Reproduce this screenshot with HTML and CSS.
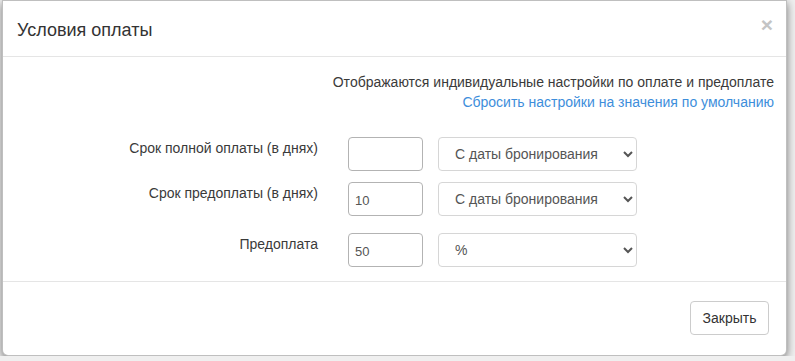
FILE: index.html
```html
<!DOCTYPE html>
<html lang="ru">
<head>
    <meta charset="UTF-8">
    <title>Условия оплаты</title>
    <link rel="stylesheet" href="styles.css">
</head>
<body>
    <div class="modal">
        <div class="modal-header">
            <h4 class="modal-title">Условия оплаты</h4>
            <button type="button" class="close">&times;</button>
        </div>
        <div class="modal-body">
            <div class="notice">
                <div>Отображаются индивидуальные настройки по оплате и предоплате</div>
                <a href="#">Сбросить настройки на значения по умолчанию</a>
            </div>
            <form class="form">
                <div class="row row-first">
                    <label for="full-days" class="control-label">Срок полной оплаты (в днях)</label>
                    <input type="text" id="full-days" class="days">
                    <select class="kind">
                        <option>С даты бронирования</option>
                    </select>
                </div>
                <div class="row row-second">
                    <label for="pre-days" class="control-label">Срок предоплаты (в днях)</label>
                    <input type="text" id="pre-days" class="days" value="10">
                    <select class="kind">
                        <option>С даты бронирования</option>
                    </select>
                </div>
                <div class="row row-third">
                    <label for="prepay" class="control-label">Предоплата</label>
                    <input type="text" id="prepay" class="days" value="50">
                    <select class="kind">
                        <option>%</option>
                    </select>
                </div>
            </form>
        </div>
        <div class="modal-footer">
            <button type="button" class="btn">Закрыть</button>
        </div>
    </div>
</body>
</html>
```

FILE: styles.css
```css
* {
    box-sizing: border-box;
}

body {
    margin: 0;
    padding: 0 8px 0 2px;
    background: #efefef;
    font-family: "Liberation Sans", Arial, sans-serif;
    font-size: 14px;
    color: #3a3a3a;
}

.modal {
    width: 785px;
    height: 356px;
    background: #fff;
    border: 1px solid rgba(0, 0, 0, 0.25);
    border-radius: 0 0 6px 6px;
    box-shadow: 0 3px 8px rgba(0, 0, 0, 0.5);
    display: flex;
    flex-direction: column;
}

.modal-header {
    display: flex;
    align-items: center;
    justify-content: space-between;
    height: 56px;
    padding: 0 13px 0 14px;
    border-bottom: 1px solid #e5e5e5;
}

.modal-title {
    margin: 0;
    font-size: 18px;
    font-weight: normal;
    line-height: 26px;
    color: #333;
    padding-top: 3px;
}

.close {
    background: none;
    border: 0;
    padding: 0;
    margin-top: -8px;
    font-family: "Liberation Sans", Arial, sans-serif;
    font-size: 21px;
    font-weight: bold;
    line-height: 1;
    color: #c4c4c4;
}

.modal-body {
    flex: 1;
    padding: 15px 12px 0 15px;
}

.notice {
    text-align: right;
    line-height: 20px;
}

.notice a {
    color: #3d8edb;
    text-decoration: none;
}

.form {
    margin-top: 25px;
}

.row {
    display: flex;
    align-items: flex-start;
}

.row-second {
    margin-top: 11px;
}

.row-third {
    margin-top: 17px;
}

.control-label {
    width: 300px;
    text-align: right;
    line-height: 20px;
    padding-top: 1px;
    margin-right: 30px;
}

.days {
    width: 75px;
    height: 34px;
    padding: 2px 6px 0;
    border: 1px solid #b3b3b3;
    border-radius: 4px;
    font-family: "Liberation Sans", Arial, sans-serif;
    font-size: 13px;
    color: #555;
    margin-right: 15px;
}

.kind {
    width: 199px;
    height: 34px;
    padding: 0 6px 0 12px;
    border: 1px solid #d6d6d6;
    border-radius: 4px;
    background: #fff;
    font-family: "Liberation Sans", Arial, sans-serif;
    font-size: 14px;
    color: #555;
}

.modal-footer {
    display: flex;
    justify-content: flex-end;
    padding: 19px 17px 0;
    height: 74px;
    border-top: 1px solid #e5e5e5;
}

.btn {
    width: 79px;
    height: 34px;
    background: #fff;
    border: 1px solid #ccc;
    border-radius: 4px;
    font-family: "Liberation Sans", Arial, sans-serif;
    font-size: 14px;
    color: #333;
}
```
